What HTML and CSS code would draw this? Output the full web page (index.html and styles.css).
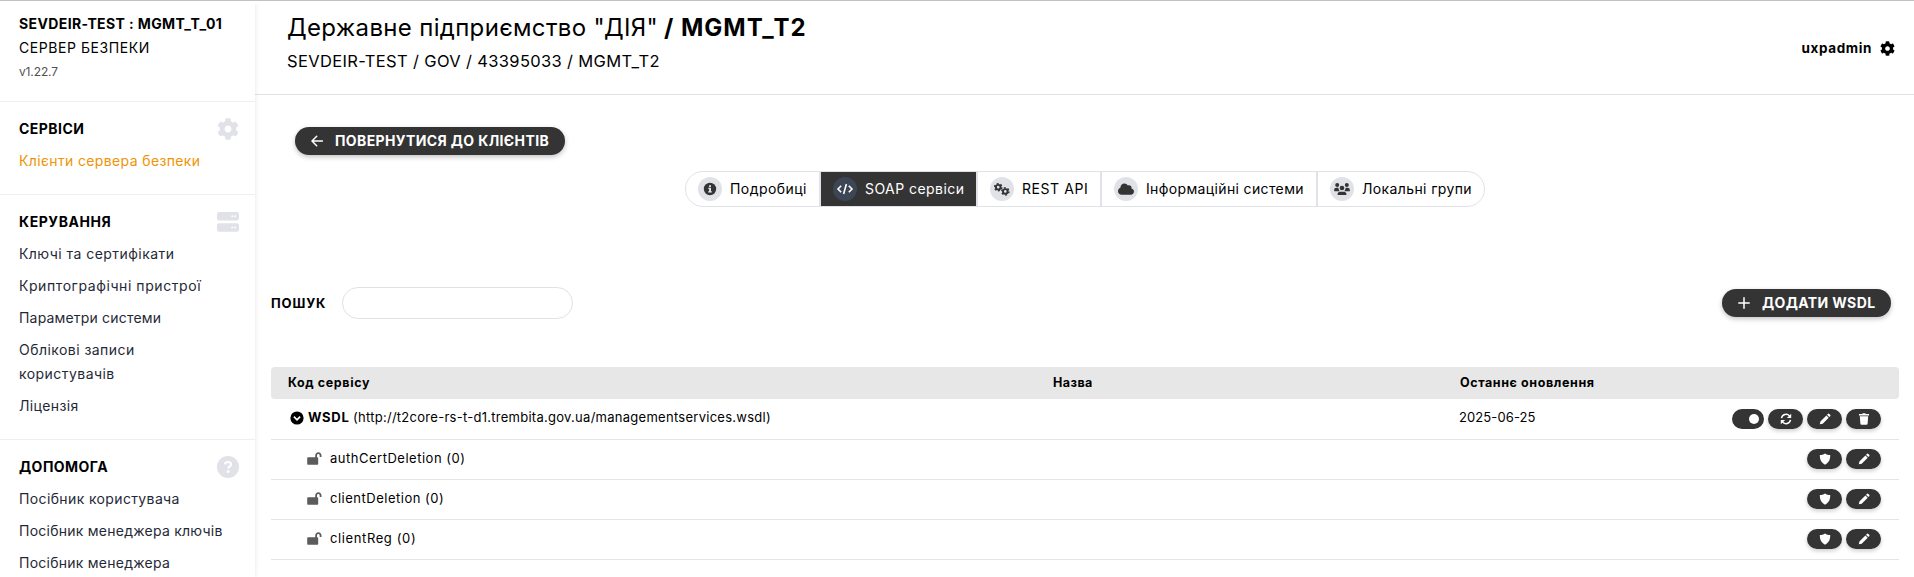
FILE: index.html
```html
<!DOCTYPE html>
<html lang="uk">
<head>
<meta charset="utf-8">
<title>MGMT_T2</title>
<link rel="stylesheet" href="styles.css">
</head>
<body>
<svg class="defs" aria-hidden="true">
  <symbol id="cog" viewBox="0 0 512 512"><path fill-rule="evenodd" d="M487.4 315.7l-42.6-24.6c4.3-23.2 4.3-47 0-70.2l42.6-24.6c4.9-2.8 7.1-8.6 5.5-14-11.1-35.6-30-67.8-54.7-94.6-3.8-4.1-10-5.1-14.8-2.3L380.8 110c-17.9-15.4-38.5-27.3-60.8-35.1V25.8c0-5.6-3.9-10.5-9.4-11.7-36.7-8.2-74.3-7.8-109.2 0-5.5 1.2-9.4 6.1-9.4 11.7V75c-22.2 7.9-42.8 19.8-60.8 35.1L88.7 85.5c-4.9-2.8-11-1.9-14.8 2.3-24.7 26.7-43.6 58.9-54.7 94.6-1.7 5.4.6 11.2 5.5 14L67.3 221c-4.3 23.2-4.3 47 0 70.2l-42.6 24.6c-4.9 2.8-7.1 8.6-5.5 14 11.1 35.6 30 67.8 54.7 94.6 3.8 4.1 10 5.1 14.8 2.3l42.6-24.6c17.9 15.4 38.5 27.3 60.8 35.1v49.2c0 5.6 3.9 10.5 9.4 11.7 36.7 8.2 74.3 7.8 109.2 0 5.5-1.2 9.4-6.1 9.4-11.7v-49.2c22.2-7.9 42.8-19.8 60.8-35.1l42.6 24.6c4.9 2.8 11 1.9 14.8-2.3 24.7-26.7 43.6-58.9 54.7-94.6 1.5-5.5-.7-11.3-5.6-14.1zM256 336c-44.1 0-80-35.9-80-80s35.9-80 80-80 80 35.9 80 80-35.9 80-80 80z"/></symbol>
  <symbol id="pencil" viewBox="0 0 12 12"><path d="M8.9.9a1 1 0 0 1 1.4 0l.9.9a1 1 0 0 1 0 1.4l-.9.9-2.3-2.3zM7.4 2.4l2.3 2.3-6 6L.8 11.3l.6-2.9z"/></symbol>
  <symbol id="shield" viewBox="0 0 12 12"><path d="M6 .4C7.600 1.400 9.300 1.900 11.200 2c.2 4.600-1.600 8-5.200 9.700C2.400 10 .6 6.600.8 2 2.700 1.900 4.400 1.400 6 .4z"/></symbol>
  <symbol id="lock" viewBox="0 0 15 13"><path d="M1.300 5.200h6.900V3.700C8.200 1.700 9.600.2 11.400.2s3.100 1.400 3.100 3.400v1.500h-1.800V3.600c0-1-.5-1.700-1.300-1.700-.9 0-1.400.7-1.400 1.700v1.600h.1c.7 0 1.100.4 1.100 1.100v5.400c0 .7-.4 1.100-1.100 1.100H1.300c-.7 0-1.100-.4-1.100-1.100V6.300c0-.7.4-1.100 1.100-1.100z"/></symbol>
</svg>

<div class="app">
  <aside class="sidebar">
    <div class="server">
      <div class="server-id">SEVDEIR-TEST : MGMT_T_01</div>
      <div class="server-kind">СЕРВЕР БЕЗПЕКИ</div>
      <div class="server-version">v1.22.7</div>
    </div>
    <section class="group">
      <h2><span class="ls-47">СЕРВІСИ</span><svg><use href="#cog"/></svg></h2>
      <a class="active ls-37">Клієнти сервера безпеки</a>
    </section>
    <section class="group">
      <h2><span class="ls-57">КЕРУВАННЯ</span><svg viewBox="0 0 22 22"><path fill-rule="evenodd" d="M2 1h18a2 2 0 0 1 2 2v4.500a2 2 0 0 1-2 2H2a2 2 0 0 1-2-2V3a2 2 0 0 1 2-2zM2 12.200h18a2 2 0 0 1 2 2v4.500a2 2 0 0 1-2 2H2a2 2 0 0 1-2-2v-4.500a2 2 0 0 1 2-2z"/><g fill="#fff"><circle cx="15.200" cy="5.200" r="1"/><circle cx="18.200" cy="5.200" r="1"/><circle cx="15.200" cy="16.400" r="1"/><circle cx="18.200" cy="16.400" r="1"/></g></svg></h2>
      <a class="ls-45">Ключі та сертифікати</a>
      <a class="ls-57">Криптографічні пристрої</a>
      <a class="ls-18">Параметри системи</a>
      <a class="ls-45">Облікові записи<br>користувачів</a>
      <a class="ls-37">Ліцензія</a>
    </section>
    <section class="group">
      <h2><span class="ls-47">ДОПОМОГА</span><svg viewBox="0 0 22 22"><circle cx="11" cy="11" r="11"/><path d="M8 8.300C8.200 6.900 9.400 6 11 6c1.800 0 3 .9 3 2.400 0 2-2.700 2-2.700 4.200" fill="none" stroke="#fff" stroke-width="2.200"/><circle cx="11.200" cy="15.600" r="1.500" fill="#fff"/></svg></h2>
      <a class="ls-37">Посібник користувача</a>
      <a class="ls-25">Посібник менеджера ключів</a>
      <a class="ls-25">Посібник менеджера</a>
    </section>
  </aside>

  <main class="main">
    <header class="header">
      <div class="heading">
        <h1><span class="org">Державне підприємство "ДІЯ"</span><b>/ MGMT_T2</b></h1>
        <p>SEVDEIR-TEST / GOV / 43395033 / MGMT_T2</p>
      </div>
      <div class="user"><span>uxpadmin</span><svg><use href="#cog"/></svg></div>
    </header>

    <div class="content">
      <button class="btn back"><svg viewBox="0 0 12 12"><path d="M11.500 6H1.200M5.700 1.300L1 6l4.700 4.700"/></svg><span>ПОВЕРНУТИСЯ ДО КЛІЄНТІВ</span></button>

      <nav class="tabs">
        <a class="tab t1"><i><svg viewBox="0 0 24 24"><circle cx="12" cy="12" r="6.200"/><path fill="#e1e2e8" d="M11.100 8.200h1.900v1.700h-1.900zM10.300 10.800H13v3.400h.8v1.200h-3.600v-1.200h.9V12h-.8z"/></svg></i><span class="ls-45">Подробиці</span></a>
        <a class="tab t2 selected"><i><svg viewBox="0 0 24 24"><path fill="none" stroke="#fff" stroke-width="1.600" d="M8.200 8.700L5 12l3.200 3.300M15.800 8.700L19 12l-3.200 3.300M13.400 7l-2.800 10"/></svg></i><span class="ls-45">SOAP сервіси</span></a>
        <a class="tab t3"><i><svg viewBox="0 0 24 24"><g fill="none" stroke="#343434"><circle cx="8.200" cy="10.200" r="2.300" stroke-width="1.900"/><circle cx="8.200" cy="10.200" r="3.600" stroke-width="1.400" stroke-dasharray="1.900 1.870"/><circle cx="15.300" cy="14.400" r="2.300" stroke-width="1.900"/><circle cx="15.300" cy="14.400" r="3.600" stroke-width="1.400" stroke-dasharray="1.900 1.870"/></g></svg></i><span class="ls-57">REST API</span></a>
        <a class="tab t4"><i><svg viewBox="0 0 24 24"><path transform="translate(4 5.800) scale(.025)" d="M537.6 226.6c4.1-10.7 6.400-22.400 6.400-34.600 0-53-43-96-96-96-19.700 0-38.100 6-53.300 16.200C367 64.200 315.300 32 256 32c-88.400 0-160 71.600-160 160 0 2.700.1 5.400.2 8.100C40.200 219.800 0 273.200 0 336c0 79.500 64.500 144 144 144h368c70.700 0 128-57.300 128-128 0-61.900-44-113.600-102.400-125.400z"/></svg></i><span class="ls-36">Інформаційні системи</span></a>
        <a class="tab t5"><i><svg viewBox="0 0 24 24"><circle cx="7.200" cy="8" r="2"/><circle cx="16.800" cy="8" r="2"/><circle cx="12" cy="11" r="2.300"/><path d="M4.200 14.200V13c0-1.300.9-2.200 2.200-2.200h1.900c.4 1.300.5 2.300 1.300 3.400zM19.800 14.200V13c0-1.300-.9-2.200-2.200-2.200h-1.900c-.4 1.300-.5 2.300-1.300 3.400zM7.600 18v-.9c0-1.400 1-2.300 2.400-2.300h4c1.400 0 2.400.9 2.400 2.300v.9z"/></svg></i><span class="ls-37">Локальні групи</span></a>
      </nav>

      <div class="toolbar">
        <label for="search">ПОШУК</label>
        <input id="search" type="text">
        <button class="btn add"><svg viewBox="0 0 12 12"><path d="M6 .8v10.400M.8 6h10.400"/></svg><span>ДОДАТИ WSDL</span></button>
      </div>

      <div class="table">
        <div class="row head"><div class="cell ls-60">Код сервісу</div><div class="ls-45">Назва</div><div class="ls-60">Останнє оновлення</div></div>
        <div class="row wsdl">
          <div class="cell"><svg class="chevron" viewBox="0 0 14 14"><circle cx="7" cy="7" r="6.600"/><path d="M3.900 5.700L7 8.800l3.100-3.100" fill="none" stroke="#fff" stroke-width="1.700"/></svg><b>WSDL</b><span class="url">(http://t2core-rs-t-d1.trembita.gov.ua/managementservices.wsdl)</span></div>
          <div></div>
          <div class="date">2025-06-25</div>
          <div class="actions">
            <button class="toggle"><span></span></button>
            <button><svg viewBox="0 0 12 12"><g fill="none" stroke="#fff" stroke-width="1.500"><path d="M1.500 5.200A4.600 4.600 0 0 1 9.600 3.100M10.500 6.800a4.600 4.600 0 0 1-8.100 2.100"/></g><path d="M11.200.8v4.300H6.900zM.8 11.200V6.900h4.300z"/></svg></button>
            <button><svg><use href="#pencil"/></svg></button>
            <button><svg viewBox="0 0 12 12"><path d="M1 1.100h3.200L4.800.3h2.400l.6.8H11v1.300H1zM1.800 3.200h8.400l-.6 7.500c-.1.700-.5 1-1.100 1h-5c-.6 0-1-.3-1.100-1z"/></svg></button>
          </div>
        </div>
        <div class="row service">
          <div class="cell"><svg class="lock"><use href="#lock"/></svg><span>authCertDeletion (0)</span></div><div></div><div></div>
          <div class="actions"><button><svg><use href="#shield"/></svg></button><button><svg><use href="#pencil"/></svg></button></div>
        </div>
        <div class="row service">
          <div class="cell"><svg class="lock"><use href="#lock"/></svg><span>clientDeletion (0)</span></div><div></div><div></div>
          <div class="actions"><button><svg><use href="#shield"/></svg></button><button><svg><use href="#pencil"/></svg></button></div>
        </div>
        <div class="row service">
          <div class="cell"><svg class="lock"><use href="#lock"/></svg><span class="ls-61">clientReg (0)</span></div><div></div><div></div>
          <div class="actions"><button><svg><use href="#shield"/></svg></button><button><svg><use href="#pencil"/></svg></button></div>
        </div>
      </div>
    </div>
  </main>
</div>
</body>
</html>
```
FILE: styles.css
```css
* { box-sizing: border-box; }
html, body { margin: 0; height: 577px; overflow: hidden; }
body { font: 400 14px/24px Inter, "Noto Sans", sans-serif; color: #000; background: #fff; }
h1, h2, p { margin: 0; font-weight: 400; }
svg { display: block; flex: none; fill: currentColor; }
.defs { position: absolute; width: 0; height: 0; }
button { border: 0; padding: 0; margin: 0; font: inherit; color: #fff; background: #343434; }

/* Letter spacing steps, in hundredths of a pixel */
.ls-18 { letter-spacing: .18px; }
.ls-25 { letter-spacing: .25px; }
.ls-36 { letter-spacing: .36px; }
.ls-37 { letter-spacing: .37px; }
.ls-45 { letter-spacing: .45px; }
.ls-47 { letter-spacing: .47px; }
.ls-57 { letter-spacing: .57px; }
.ls-60 { letter-spacing: .6px; }
.ls-61 { letter-spacing: .61px; }

.app { display: flex; height: 577px; border-top: 1px solid #c1c1c1; }

.sidebar { width: 255px; flex: none; overflow: hidden; box-shadow: 0 0 5px rgba(0, 0, 0, .1); clip-path: inset(3px -10px 0 0); }
.server { height: 101px; padding: 11px 19px 0; border-bottom: 1px solid #efeff1; }
.server-id { font-weight: 700; letter-spacing: .38px; }
.server-kind { letter-spacing: .56px; }
.server-version { font-size: 12px; letter-spacing: -.13px; color: #4f4f4f; }
.group { display: flex; flex-direction: column; gap: 8px; padding: 15px 16px 21px 19px; border-bottom: 1px solid #efeff1; }
.group h2 { display: flex; justify-content: space-between; align-items: center; height: 24px; font-size: 14px; font-weight: 700; line-height: 24px; }
.group h2 svg { width: 22px; height: 22px; color: #e1e2e8; }
.group a { color: #1f2937; white-space: nowrap; }
.group .active { color: #f09305; }

.main { flex: 1; min-width: 0; }
.header { display: flex; justify-content: space-between; height: 94px; padding: 10px 19px 0 32px; border-bottom: 1px solid #e1e2e8; }
.header h1 { display: flex; gap: 6px; font-size: 24px; line-height: 34px; white-space: nowrap; }
.org { letter-spacing: .33px; }
.header h1 b { font-weight: 700; letter-spacing: 1px; }
.header p { margin-top: 4px; font-size: 16.5px; letter-spacing: .34px; }
.user { display: flex; align-items: center; gap: 8px; height: 24px; margin-top: 25px; font-size: 13.5px; font-weight: 700; letter-spacing: .6px; }
.user svg { width: 15px; height: 15px; }

.content { padding: 32px 15px 0 16px; }
.btn { display: flex; align-items: center; height: 28px; border-radius: 14px; font-weight: 700; white-space: nowrap; box-shadow: 0 2px 5px rgba(0, 0, 0, .24); }
.btn svg { width: 12px; height: 12px; fill: none; stroke: #fff; stroke-width: 1.5; stroke-linecap: round; stroke-linejoin: round; }
.back { width: 270px; margin-left: 24px; padding-left: 16px; gap: 12px; letter-spacing: .38px; }
.tabs { display: flex; width: 800px; height: 36px; margin: 16px auto 0; border: 1px solid #e1e2e8; border-radius: 18px; overflow: hidden; }
.tab { display: flex; align-items: center; gap: 8px; padding-left: 12px; border-right: 2px solid #e1e2e8; white-space: nowrap; color: #000; }
.tab i { width: 24px; height: 24px; border-radius: 50%; background: #e1e2e8; color: #343434; }
.tab svg { width: 24px; height: 24px; }
.t1 { width: 135px; }
.t2 { width: 157px; }
.t3 { width: 124px; }
.t4 { width: 216px; }
.t5 { flex: 1; border-right: 0; }
.selected { background: #343434; background-clip: padding-box; color: #fff; }
.selected i { background: #3c4654; }

.toolbar { display: flex; align-items: center; height: 32px; margin-top: 80px; }
.toolbar label { width: 71px; font-size: 13px; font-weight: 700; letter-spacing: .85px; }
.toolbar input { width: 231px; height: 32px; padding: 0 14px; border: 1px solid #e1e2e8; border-radius: 16px; background: #fff; outline: 0; font: inherit; }
.add { width: 169px; margin: 0 8px 0 auto; padding-left: 16px; gap: 12px; letter-spacing: .38px; }

.table { margin-top: 48px; font-size: 13px; }
.row { display: grid; grid-template-columns: 782px 407px 1fr auto; align-items: start; height: 40px; padding-right: 18px; border-bottom: 1px solid #e5e5e5; line-height: 37px; }
.cell { display: flex; align-items: center; white-space: nowrap; }
.head { height: 32px; border: 0; border-radius: 4px; background: #e7e7e7; font-size: 12.5px; font-weight: 700; line-height: 32px; }
.head .cell { padding-left: 17px; }
.wsdl { height: 41px; }
.wsdl .cell { padding-left: 19px; }
.chevron { width: 14px; height: 14px; margin-right: 4px; }
.wsdl b { width: 45px; letter-spacing: .7px; }
.url { letter-spacing: .27px; }
.date { margin-left: -1px; letter-spacing: .1px; }
.service .cell { padding-left: 36px; letter-spacing: .51px; }
.lock { width: 15px; height: 13px; margin-right: 8px; color: #5c5c5c; }
.actions { display: flex; gap: 4px; margin-top: 9px; }
.wsdl .actions { margin-top: 10px; }
.actions button { display: flex; align-items: center; justify-content: center; width: 35px; height: 20px; border-radius: 10px; box-shadow: 0 2px 4px rgba(0, 0, 0, .2); }
.actions svg { width: 12px; height: 12px; }
.actions .toggle { width: 32px; justify-content: flex-end; padding-right: 5px; box-shadow: none; }
.toggle span { width: 10px; height: 10px; border-radius: 50%; background: #fff; }
```
